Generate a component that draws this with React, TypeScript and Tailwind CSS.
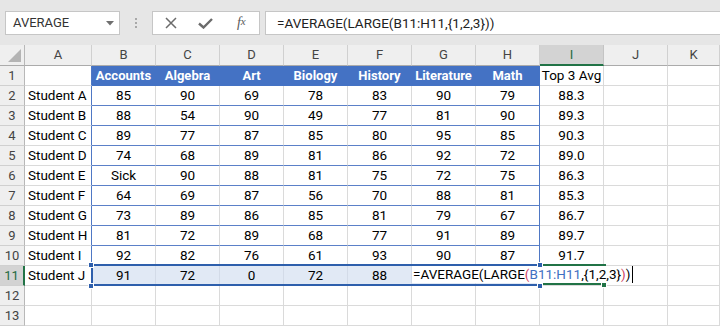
import React from "react";

// ── Data ──────────────────────────────────────────────────────────────────────

const COLS = ["A", "B", "C", "D", "E", "F", "G", "H", "I", "J", "K"];

const ROWS: string[][] = [
  ["", "Accounts", "Algebra", "Art", "Biology", "History", "Literature", "Math", "Top 3 Avg"],
  ["Student A", "85", "90", "69", "78", "83", "90", "79", "88.3"],
  ["Student B", "88", "54", "90", "49", "77", "81", "90", "89.3"],
  ["Student C", "89", "77", "87", "85", "80", "95", "85", "90.3"],
  ["Student D", "74", "68", "89", "81", "86", "92", "72", "89.0"],
  ["Student E", "Sick", "90", "88", "81", "75", "72", "75", "86.3"],
  ["Student F", "64", "69", "87", "56", "70", "88", "81", "85.3"],
  ["Student G", "73", "89", "86", "85", "81", "79", "67", "86.7"],
  ["Student H", "81", "72", "89", "68", "77", "91", "89", "89.7"],
  ["Student I", "92", "82", "76", "61", "93", "90", "87", "91.7"],
];

const ROW11 = ["91", "72", "0", "72", "88", "", ""];

// ── Formula bar ───────────────────────────────────────────────────────────────

function FormulaBar() {
  return (
    <div className="h-[45px] bg-[#e6e6e6] flex items-start pt-[11px] pl-[5px]">
      <div className="w-[115px] h-[24px] bg-white border border-[#c6c6c6] flex items-center justify-between pl-[7px] pr-[5px] text-[13px] text-[#333]">
        <span>AVERAGE</span>
        <svg width="8" height="5" viewBox="0 0 8 5">
          <path d="M0 0h8L4 4.5z" fill="#6f6f6f" />
        </svg>
      </div>
      <div className="w-[32px] h-[24px] flex flex-col items-center justify-center gap-[2px]">
        <div className="w-[2px] h-[2px] bg-[#a8a8a8]" />
        <div className="w-[2px] h-[2px] bg-[#a8a8a8]" />
        <div className="w-[2px] h-[2px] bg-[#a8a8a8]" />
      </div>
      <div className="w-[108px] h-[24px] bg-white border border-[#c6c6c6] flex items-center">
        <div className="w-[36px] flex justify-center">
          <svg width="12" height="12" viewBox="0 0 12 12">
            <path d="M1 1l10 10M11 1L1 11" stroke="#6b6b6b" strokeWidth="1.5" />
          </svg>
        </div>
        <div className="w-[36px] flex justify-center">
          <svg width="15" height="11" viewBox="0 0 15 11">
            <path d="M1 5.5l4.5 4L14 1" stroke="#6b6b6b" strokeWidth="2.4" fill="none" />
          </svg>
        </div>
        <div className="w-[36px] flex justify-center font-['Liberation_Serif',serif] italic text-[14px] text-[#5a5a5a] leading-none">
          f<span className="text-[11px]">x</span>
        </div>
      </div>
      <div className="ml-[5px] flex-1 h-[24px] bg-white border border-[#c6c6c6] border-r-0 flex items-center pl-[11px] text-[13.5px] text-[#222]">
        =AVERAGE(LARGE(B11:H11,{"{"}1,2,3{"}"}))
      </div>
    </div>
  );
}

// ── Sheet ─────────────────────────────────────────────────────────────────────

function RowHeader({ n }: { n: number }) {
  const active = n === 11;
  return (
    <div
      className={`flex items-center justify-center text-[13px] border-b border-b-[#d0d0d0] ${
        active
          ? "bg-[#d3d3d3] text-[#1e6b3f] border-r-2 border-r-[#217346]"
          : "bg-[#efefef] text-[#444] border-r border-r-[#b8b8b8]"
      }`}
    >
      {n}
    </div>
  );
}

function dataCellClass(r: number, c: number) {
  // r: 1-based sheet row, c: 0 = column A
  if (r === 1 && c >= 1 && c <= 7) {
    return "bg-[#4472c4] text-white font-bold text-[13px] justify-center border-b border-b-[#4472c4] border-r border-r-[#4472c4]";
  }
  if (c === 0 && r <= 11) {
    return "pl-[3px] border-b border-b-[#dadada] border-r border-r-[#4f78c4]";
  }
  if (c >= 1 && c <= 7 && r <= 10) {
    return `justify-center border-b border-b-[#5b80c8] border-r ${
      c === 7 ? "border-r-[#4f78c4]" : "border-r-[#dadada]"
    }`;
  }
  return "justify-center border-b border-b-[#dadada] border-r border-r-[#dadada]";
}

function Cell({ r, c, text }: { r: number; c: number; text: string }) {
  return (
    <div className={`flex items-center text-[13.5px] text-black whitespace-nowrap ${dataCellClass(r, c)}`}>
      {text}
    </div>
  );
}

function Handle({ pos, color }: { pos: string; color: string }) {
  return <div className={`absolute w-[6px] h-[6px] border border-white ${pos} ${color}`} />;
}

function RangeRow() {
  // B11:H11 – the range referenced by the formula being edited
  return (
    <div className="col-span-7 relative flex bg-[#e1e9f5]">
      {ROW11.map((v, i) => (
        <div
          key={i}
          className="w-[64px] flex items-center justify-center text-[13.5px] border-r border-r-[#d3dbe8] border-b border-b-[#dadada]"
        >
          {v}
        </div>
      ))}
      <div className="absolute z-20 -top-[2px] -left-[1px] -right-[1px] bottom-0 border-y-2 border-l-2 border-[#2e5fac] pointer-events-none" />
      <Handle pos="-top-[4px] -left-[4px] z-30" color="bg-[#2e5fac]" />
      <Handle pos="-bottom-[3px] -left-[4px] z-30" color="bg-[#2e5fac]" />
      <Handle pos="-top-[4px] -right-[3px] z-30" color="bg-[#2e5fac]" />
      <Handle pos="-bottom-[3px] -right-[3px] z-30" color="bg-[#2e5fac]" />
    </div>
  );
}

function EditingCell() {
  // I11 in edit mode; the formula text spills over G11:J11
  return (
    <div className="relative border-b border-b-[#dadada] border-r border-r-[#dadada]">
      <div className="absolute z-10 top-0 bottom-[2px] -left-[128px] w-[222px] bg-white flex items-center pl-[1px] text-[13.5px] text-black whitespace-nowrap">
        =AVERAGE(LARGE<span className="text-[#d0435f]">(</span>
        <span className="text-[#3f6fc2]">B11:H11</span>,{"{"}1,2,3{"}"}
        <span className="text-[#d0435f]">)</span>)
        <span className="ml-[2px] w-px h-[17px] bg-black" />
      </div>
      <div className="absolute z-20 -top-[2px] left-[2px] -right-[3px] h-[2px] bg-[#217346]" />
      <div className="absolute z-20 bottom-0 left-[2px] -right-[3px] h-[2px] bg-[#217346]" />
      <Handle pos="-bottom-[3px] -right-[4px] z-30" color="bg-[#217346]" />
    </div>
  );
}

function Sheet() {
  return (
    <div className="grid grid-cols-[25px_67px_repeat(9,64px)_52px] grid-rows-[21px_repeat(13,20px)]">
      {/* corner */}
      <div className="relative bg-[#efefef] border-r border-r-[#b8b8b8] border-b border-b-[#ababab]">
        <svg className="absolute right-[3px] bottom-[3px]" width="13" height="13" viewBox="0 0 13 13">
          <path d="M13 0V13H0z" fill="#b4b4b4" />
        </svg>
      </div>
      {COLS.map((l) =>
        l === "I" ? (
          <div
            key={l}
            className="flex items-center justify-center text-[13px] bg-[#d3d3d3] text-[#1e6b3f] border-r border-r-[#c4c4c4] border-b-2 border-b-[#217346]"
          >
            {l}
          </div>
        ) : (
          <div
            key={l}
            className="flex items-center justify-center text-[13px] bg-[#efefef] text-[#444] border-r border-r-[#d0d0d0] border-b border-b-[#ababab]"
          >
            {l}
          </div>
        ),
      )}

      {ROWS.map((row, ri) => {
        const r = ri + 1;
        return (
          <React.Fragment key={r}>
            <RowHeader n={r} />
            {COLS.map((_, c) => (
              <Cell key={c} r={r} c={c} text={row[c] ?? ""} />
            ))}
          </React.Fragment>
        );
      })}

      {/* row 11 */}
      <RowHeader n={11} />
      <Cell r={11} c={0} text="Student J" />
      <RangeRow />
      <EditingCell />
      <Cell r={11} c={9} text="" />
      <Cell r={11} c={10} text="" />

      {[12, 13].map((r) => (
        <React.Fragment key={r}>
          <RowHeader n={r} />
          {COLS.map((_, c) => (
            <Cell key={c} r={r} c={c} text="" />
          ))}
        </React.Fragment>
      ))}
    </div>
  );
}

export default function App() {
  return (
    <div className="w-[720px] h-[327px] overflow-hidden bg-white font-['Roboto',sans-serif]">
      <FormulaBar />
      <Sheet />
    </div>
  );
}
